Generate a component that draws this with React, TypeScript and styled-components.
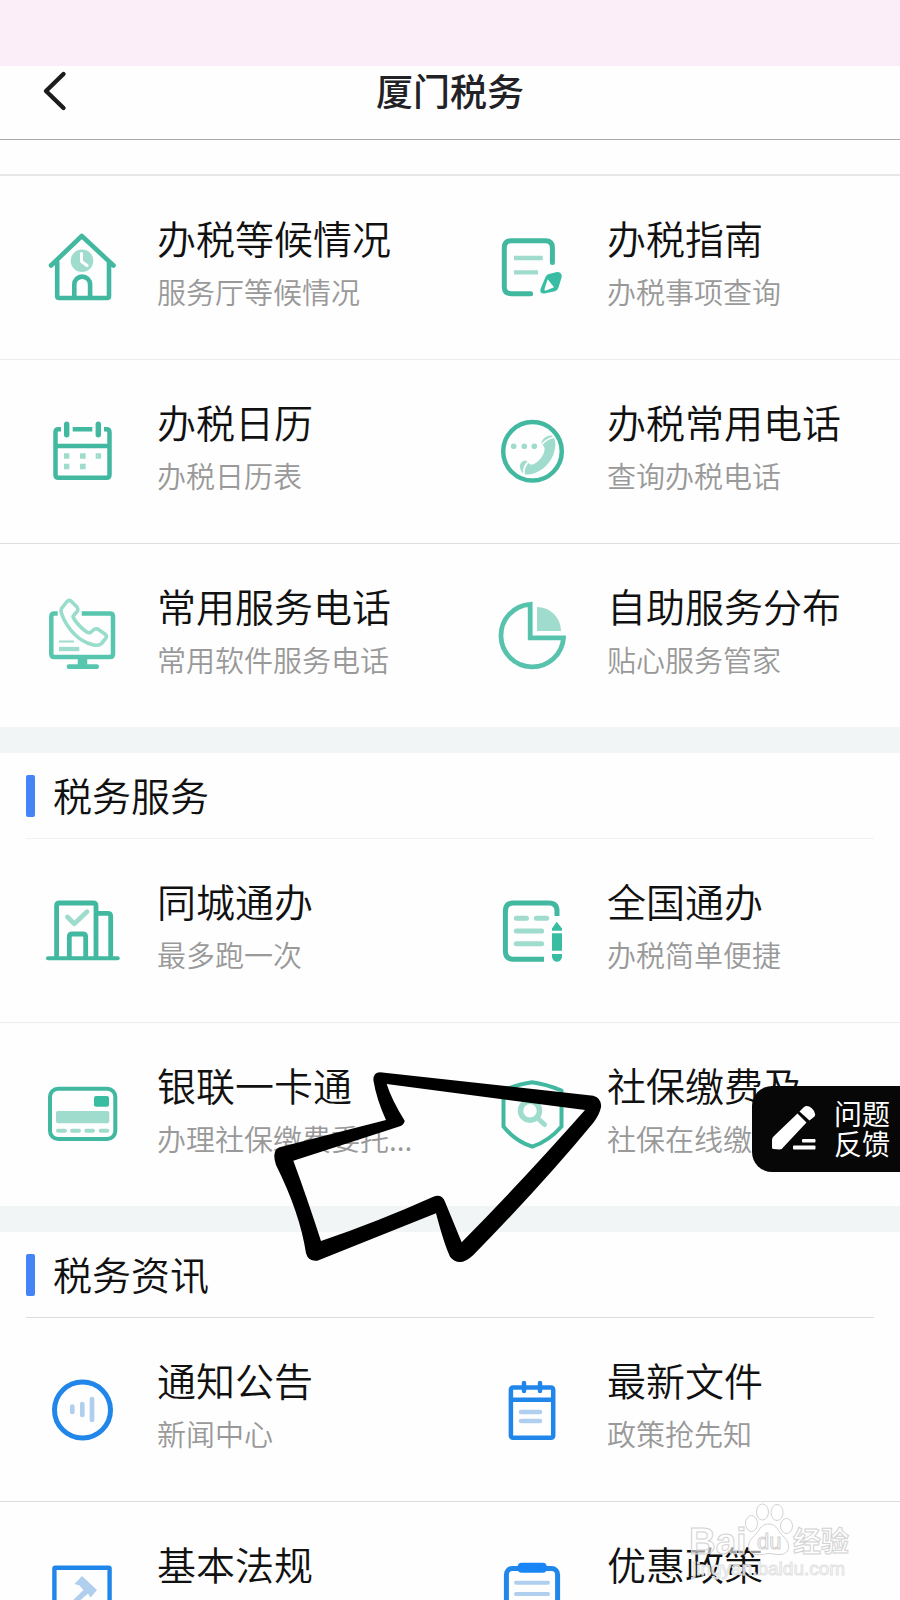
import React from "react";
import styled, { createGlobalStyle } from "styled-components";

const GREEN = "#42b8a0";
const MINT = "#a0dccd";
const BLUE = "#2186ea";
const SKY = "#b0cfee";

const GlobalStyle = createGlobalStyle`
  * { box-sizing: border-box; }
  body {
    margin: 0;
    background: #fefefe;
    font-family: "Noto Sans CJK SC", sans-serif;
    color: #111;
  }
`;

const Screen = styled.div`
  position: relative;
  display: flex;
  flex-direction: column;
  height: 100vh;
  overflow: hidden;
  background: #fefefe;
`;

const StatusBar = styled.div`
  flex: none;
  height: 66px;
  background: #fbeef8;
`;

const Header = styled.header`
  flex: none;
  display: grid;
  grid-template-columns: 110px 1fr 110px;
  align-items: start;
  height: 74px;
  border-bottom: 1px solid #a9a9a9;
`;

const BackButton = styled.button`
  display: flex;
  align-items: center;
  height: 50px;
  padding: 0 0 0 42px;
  border: 0;
  background: none;
`;

const PageTitle = styled.h1`
  margin: 0;
  font-size: 37px;
  line-height: 48px;
  font-weight: 500;
  text-align: center;
  color: #222226;
`;

const Content = styled.main`
  flex: 1;
  min-height: 0;
  overflow-y: auto;
  scrollbar-width: none;
`;

const Spacer = styled.div`
  height: 36px;
  border-bottom: 2px solid #e6e6e6;
`;

const Section = styled.section`
  position: relative;
  & + & {
    border-top: 26px solid #f1f5f6;
  }
`;

const SectionHead = styled.div<{ $line: string }>`
  display: flex;
  align-items: center;
  gap: 18px;
  height: 86px;
  margin: 0 26px;
  border-bottom: 1px solid ${(p) => p.$line};
`;

const Marker = styled.span`
  width: 9px;
  height: 42px;
  border-radius: 2px;
  background: #4484f7;
`;

const SectionTitle = styled.h2`
  margin: 0;
  padding-bottom: 4px;
  font-size: 39px;
  line-height: 54px;
  font-weight: 350;
`;

const Row = styled.div<{ $line?: string }>`
  display: grid;
  grid-template-columns: 1fr 1fr;
  min-height: ${(p) => (p.$line ? "184px" : "183px")};
  border-bottom: ${(p) => (p.$line ? `1px solid ${p.$line}` : "0")};
`;

const Entry = styled.a`
  display: flex;
  align-items: flex-start;
  gap: 39px;
  min-width: 0;
  padding-left: 46px;
  color: inherit;
  text-decoration: none;
`;

const IconSvg = styled.svg`
  flex: none;
  width: 72px;
  height: 72px;
  margin-top: 56px;
  overflow: visible;
`;

const EntryText = styled.div`
  display: flex;
  flex-direction: column;
  gap: 6px;
  min-width: 0;
  padding-top: 34px;
  white-space: nowrap;
`;

const EntryTitle = styled.span`
  font-size: 39px;
  line-height: 54px;
  font-weight: 350;
`;

const EntryNote = styled.span`
  font-size: 29px;
  line-height: 42px;
  font-weight: 350;
  color: #999;
`;

const ArrowSvg = styled.svg`
  position: absolute;
  z-index: 1;
  left: 260px;
  top: 297px;
  width: 360px;
  height: 220px;
  pointer-events: none;
`;

const Feedback = styled.button`
  position: absolute;
  z-index: 2;
  right: 0;
  top: 1086px;
  display: flex;
  align-items: center;
  gap: 18px;
  height: 86px;
  padding: 0 10px 2px 20px;
  border: 0;
  border-radius: 20px 0 0 20px;
  background: #070707;
  color: #fff;
  font-family: inherit;
  font-size: 28px;
  line-height: 30px;
  font-weight: 400;
  text-align: left;
`;

const Watermark = styled.svg`
  position: absolute;
  right: 40px;
  bottom: 15px;
  width: 180px;
  height: 90px;
  pointer-events: none;
`;

type Kids = { children: React.ReactNode; color?: string; w?: number };

const Icon = ({ children, color = GREEN, w = 4.5 }: Kids) => (
  <IconSvg
    viewBox="0 0 72 72"
    fill="none"
    stroke={color}
    strokeWidth={w}
    strokeLinecap="round"
    strokeLinejoin="round"
    aria-hidden="true"
  >
    {children}
  </IconSvg>
);

const HouseIcon = () => (
  <Icon w={4.6}>
    <path d="M5 33.5 35.8 4 67.5 33.5M11.2 30V64q0 2 2 2H61q2 0 2-2V30" />
    <path d="M28.3 65V52.5a7.9 7.9 0 0 1 15.8 0V65" />
    <circle cx="36" cy="28.7" r="11.3" fill={MINT} stroke="none" />
    <path d="M35.5 21.5V29.5L41 33.5" stroke="#fff" strokeWidth="3" />
  </Icon>
);

const GuideIcon = () => (
  <Icon w={5}>
    <path d="M56.4 30.5V15.7q0-7-7-7H15.3q-7 0-7 7V54.7q0 7 7 7H34.6" />
    <path d="M18 26H46.7M18 40.3H42" stroke={MINT} strokeWidth="4.3" strokeLinecap="butt" />
    <path
      d="M49.5 45Q50.500 42.500 53 42L61 40Q66 40 65.700 45L62.500 55.500Q61.500 58.500 59 59.200L48.500 61.500Q43.500 62 44.500 57Z"
      fill="#38bda3"
      stroke="none"
    />
    <path d="M51.7 47.3 58 55.3 50 58.5Q48 59 48.5 57Z" fill="#fff" stroke="none" />
  </Icon>
);

const CalendarIcon = () => (
  <Icon>
    <path
      d="M15 13.2H12.5q-3 0-3 3V58.7q0 3 3 3H60.5q3 0 3-3V16.2q0-3-3-3H58M26.7 13.2H46.3M9.5 30H63.5"
      strokeLinecap="butt"
    />
    <path d="M20.7 8.2V18.8M52.3 8.2V18.8" strokeWidth="5.4" />
    <path
      d="M18 40H23.3M34 40H39.7M49.7 40H55M18 50.5H23.3M34 50.5H39.7"
      stroke={MINT}
      strokeWidth="5.3"
      strokeLinecap="butt"
    />
  </Icon>
);

const HotlineIcon = () => (
  <Icon>
    <circle cx="36.5" cy="35.3" r="29.3" />
    <g fill={MINT} stroke="none">
      <circle cx="17.7" cy="30.3" r="2.8" />
      <circle cx="28.3" cy="30.3" r="2.8" />
      <circle cx="38.3" cy="30.3" r="2.8" />
      <path d="M46.5 29Q51 23.5 58 22 61 27 57.5 38.5 54 47 46.5 53 38 59 29 58.5 27.5 53 32.5 47 35 50 39 47.5 47 42 48.5 34.5 49 31 46.5 29Z" />
      <path d="M45 28Q46 22 52 20 56 19 57 20.5 50 22.5 45 28Z" />
      <path d="M27 57.5Q22.5 52 24.5 47.5 28 42.5 31.5 45.5 26.5 50 27 57.5Z" />
    </g>
  </Icon>
);

const MonitorIcon = () => (
  <Icon color="#58c6af">
    <path d="M11.7 13.5H8.3q-3 0-3 3V54q0 3 3 3H64q3 0 3-3V16.5q0-3-3-3H35.7" strokeLinecap="butt" />
    <path d="M36.5 57V67" strokeWidth="9.5" strokeLinecap="butt" />
    <path d="M23 66.7H50.7" strokeWidth="4.7" />
    <path d="M13 41.5H28" stroke={MINT} strokeWidth="2" strokeLinecap="butt" />
    <path d="M13 49H33.3" stroke={MINT} strokeWidth="4.3" strokeLinecap="butt" />
    <path
      d="M21 1.5 15.5 8.5Q14.5 10.5 15.5 13.5 19.5 25 28.5 34.3 37 42.5 46 44.5 52.5 46.5 55.5 43.5L60 38Q61 36 59.5 34.5L52.5 29.5Q50.5 28 48 29.5L44.5 32.5Q42.5 33.3 40 31.5 32 25.5 27.5 18 26.5 16.5 28 15L31.5 11Q32.5 9 31 7L25.5 1.5Q23 -0.5 21 1.5Z"
      stroke="#98dccb"
      strokeWidth="3.6"
    />
  </Icon>
);

const PieIcon = () => (
  <Icon color="#58c3ad" w={4.8}>
    <path d="M34.2 4.3A31.3 31.3 0 1 0 67.5 37.8H34.2Z" strokeLinejoin="miter" />
    <path d="M41 7A24 24 0 0 1 65 31H41Z" fill={MINT} stroke="none" />
  </Icon>
);

const CityIcon = () => (
  <Icon w={4.8}>
    <path d="M10.6 62V11q0-3 3-3H47q3 0 3 3V62M52 18.3H61.7q3 0 3 3V62M23.3 62V42q0-3 3-3H36.7q3 0 3 3V62" />
    <path d="M2 63.3H71.7" strokeWidth="4" />
    <path d="M21.5 22 28.3 28.7 41 16.7" stroke={MINT} />
  </Icon>
);

const NationIcon = () => (
  <Icon w={5}>
    <path d="M61 21V16q0-8-8-8H17.4q-8 0-8 8V56.3q0 8 8 8H48" strokeLinecap="butt" />
    <path d="M20.3 23.3H30.5M40.3 23.3H50.7M20.3 36H45.7M20.3 48.7H45.7" stroke={MINT} />
    <path
      d="M60.7 26.7 66 33.5V35.7H56V33.5ZM56 38.3H66V55.7H56ZM56 59H66V62Q65 66.7 61 66.7T56 62Z"
      fill="#38bda3"
      stroke="none"
    />
  </Icon>
);

const CardIcon = () => (
  <Icon w={4}>
    <rect x="4" y="9.7" width="65.3" height="50.3" rx="8" />
    <rect x="48" y="17" width="15" height="10.7" rx="2" fill="#38bda3" stroke="none" />
    <rect x="10" y="32" width="53.3" height="12.3" rx="2" fill={MINT} stroke="none" />
    <path d="M12 51.7H19M26 51.7H33M40.3 51.7H47M54.7 51.7H61.3" stroke={MINT} />
  </Icon>
);

const ShieldIcon = () => (
  <Icon w={4}>
    <path d="M36.3 3.3Q49 5 65.5 11.5V47.5Q53 62 36.3 67.7 19 62 7.5 47.5V11.5Q23 5 36.3 3.3Z" />
    <circle cx="34" cy="31.7" r="9.5" stroke={MINT} strokeWidth="5.5" />
    <path d="M42 39.5 48.5 45.5" stroke={MINT} strokeWidth="5" />
  </Icon>
);

const NoticeIcon = () => (
  <Icon color={BLUE} w={5}>
    <circle cx="36.5" cy="36" r="28" />
    <path d="M26.3 32.7V38M36.3 30V41M46 25V46" stroke={SKY} strokeWidth="4.7" />
  </Icon>
);

const FileIcon = () => (
  <Icon color={BLUE} w={4.5}>
    <rect x="14.9" y="13.5" width="42.3" height="50.3" rx="2" />
    <path d="M15 25.7H57M28 9V17M44 9V17" />
    <path d="M25 38H44M25 47H44" stroke={SKY} />
  </Icon>
);

const LawIcon = () => (
  <Icon color={BLUE} w={4.4}>
    <rect x="8.4" y="9.8" width="55.2" height="55.2" rx="1" />
    <path d="M28.5 26 36 18 51 32 44.5 39.5 42 35.5 22 53 19 50 37.5 32 33.5 27.5Z" fill={SKY} stroke="none" />
  </Icon>
);

const PolicyIcon = () => (
  <Icon color={BLUE} w={5}>
    <rect x="10.4" y="10.4" width="51.2" height="56" rx="6" />
    <rect x="21.7" y="4.7" width="29" height="10" rx="4" fill="#1a86f5" stroke="none" />
    <path d="M20 24.7H52M20 36H52" stroke={SKY} strokeWidth="4" />
  </Icon>
);

type Item = { icon: React.ReactNode; title: string; note?: string };

const enquiry: Item[][] = [
  [
    { icon: <HouseIcon />, title: "办税等候情况", note: "服务厅等候情况" },
    { icon: <GuideIcon />, title: "办税指南", note: "办税事项查询" },
  ],
  [
    { icon: <CalendarIcon />, title: "办税日历", note: "办税日历表" },
    { icon: <HotlineIcon />, title: "办税常用电话", note: "查询办税电话" },
  ],
  [
    { icon: <MonitorIcon />, title: "常用服务电话", note: "常用软件服务电话" },
    { icon: <PieIcon />, title: "自助服务分布", note: "贴心服务管家" },
  ],
];

const services: Item[][] = [
  [
    { icon: <CityIcon />, title: "同城通办", note: "最多跑一次" },
    { icon: <NationIcon />, title: "全国通办", note: "办税简单便捷" },
  ],
  [
    { icon: <CardIcon />, title: "银联一卡通", note: "办理社保缴费委托..." },
    { icon: <ShieldIcon />, title: "社保缴费及...", note: "社保在线缴费" },
  ],
];

const news: Item[][] = [
  [
    { icon: <NoticeIcon />, title: "通知公告", note: "新闻中心" },
    { icon: <FileIcon />, title: "最新文件", note: "政策抢先知" },
  ],
  [
    { icon: <LawIcon />, title: "基本法规" },
    { icon: <PolicyIcon />, title: "优惠政策" },
  ],
];

const Rows = ({ rows, lines }: { rows: Item[][]; lines: string[] }) => (
  <>
    {rows.map((row, i) => (
      <Row key={i} $line={lines[i]}>
        {row.map((item) => (
          <Entry key={item.title} href="#">
            {item.icon}
            <EntryText>
              <EntryTitle>{item.title}</EntryTitle>
              {item.note && <EntryNote>{item.note}</EntryNote>}
            </EntryText>
          </Entry>
        ))}
      </Row>
    ))}
  </>
);

const Heading = ({ text, line }: { text: string; line: string }) => (
  <SectionHead $line={line}>
    <Marker />
    <SectionTitle>{text}</SectionTitle>
  </SectionHead>
);

export default function App() {
  return (
    <Screen>
      <GlobalStyle />
      <StatusBar />
      <Header>
        <BackButton type="button" aria-label="返回">
          <svg width="26" height="42" viewBox="0 0 26 42" fill="none" stroke="#1c1c1c" strokeWidth="4.4" strokeLinecap="round" strokeLinejoin="round">
            <path d="M21.5 4 4 21 21.5 38" />
          </svg>
        </BackButton>
        <PageTitle>厦门税务</PageTitle>
      </Header>
      <Content>
        <Spacer />
        <Section>
          <Rows rows={enquiry} lines={["#ebebeb", "#dedede"]} />
        </Section>
        <Section>
          <Heading text="税务服务" line="#f0f0f0" />
          <Rows rows={services} lines={["#ebebeb"]} />
          <ArrowSvg viewBox="0 0 1080 660" aria-hidden="true">
            <path
              fillRule="evenodd"
              d="M340 90Q340 68 360 67L1000 137Q1026 145 1023 172 1018 195 1000 218 850 400 640 615 598 655 570 620 553 585 528 490L172 632Q145 635 138 610 120 490 48 345 32 296 65 290L378 210Q350 150 340 90ZM380 102Q395 150 434 212 434 222 420 229L100 332Q140 440 183 573 360 512 520 440 545 430 555 455L605 577Q780 400 975 180Z"
            />
          </ArrowSvg>
        </Section>
        <Section>
          <Heading text="税务资讯" line="#dcdcdc" />
          <Rows rows={news} lines={["#dcdcdc"]} />
        </Section>
      </Content>
      <Feedback type="button">
        <svg width="44" height="46" viewBox="0 0 44 46" fill="#fff" aria-hidden="true">
          <path d="M25.5 8.5 34.5 17.5 11.5 42Q10 44.5 7.5 44.5L1.5 44Q0 44 0 42.5L0 35Q0 32.5 2 31Z" />
          <path d="M27.5 6.5 31.5 2.5Q35 -0.5 39.5 3 44.5 7.5 42.5 11.5L37.5 15.5Z" />
          <rect x="30" y="34" width="13.5" height="3.5" rx="1" />
          <rect x="21" y="40.5" width="22.5" height="4" rx="1" />
        </svg>
        <span>
          问题
          <br />
          反馈
        </span>
      </Feedback>
      <Watermark viewBox="0 0 180 90" fill="#fff" fillOpacity="0.6" stroke="#d2d2d2" strokeWidth="1" aria-hidden="true">
        <text x="9" y="59" fontFamily="Liberation Sans" fontWeight="700" fontSize="37">Bai</text>
        <ellipse cx="71.5" cy="28.5" rx="6" ry="8" />
        <ellipse cx="82.5" cy="17" rx="6" ry="8" />
        <ellipse cx="97" cy="17.5" rx="6" ry="8" />
        <ellipse cx="106.5" cy="31" rx="6" ry="7.5" />
        <path d="M89 29C97 29 98 37 104 42 110 48 111 58 101 59.5 95 60 92 58 88 58.5 82 60 69 62 68.5 52 68 44 76 41 79 35 82 30 85 29 89 29Z" />
        <text x="77" y="54" fontFamily="Liberation Sans" fontSize="22">du</text>
        <text x="113" y="57" fontFamily="Noto Sans CJK SC" fontWeight="700" fontSize="28">经验</text>
        <text x="12" y="80" fontFamily="Liberation Sans" fontSize="19" stroke="#e2e2e2">jingyan.baidu.com</text>
      </Watermark>
    </Screen>
  );
}
